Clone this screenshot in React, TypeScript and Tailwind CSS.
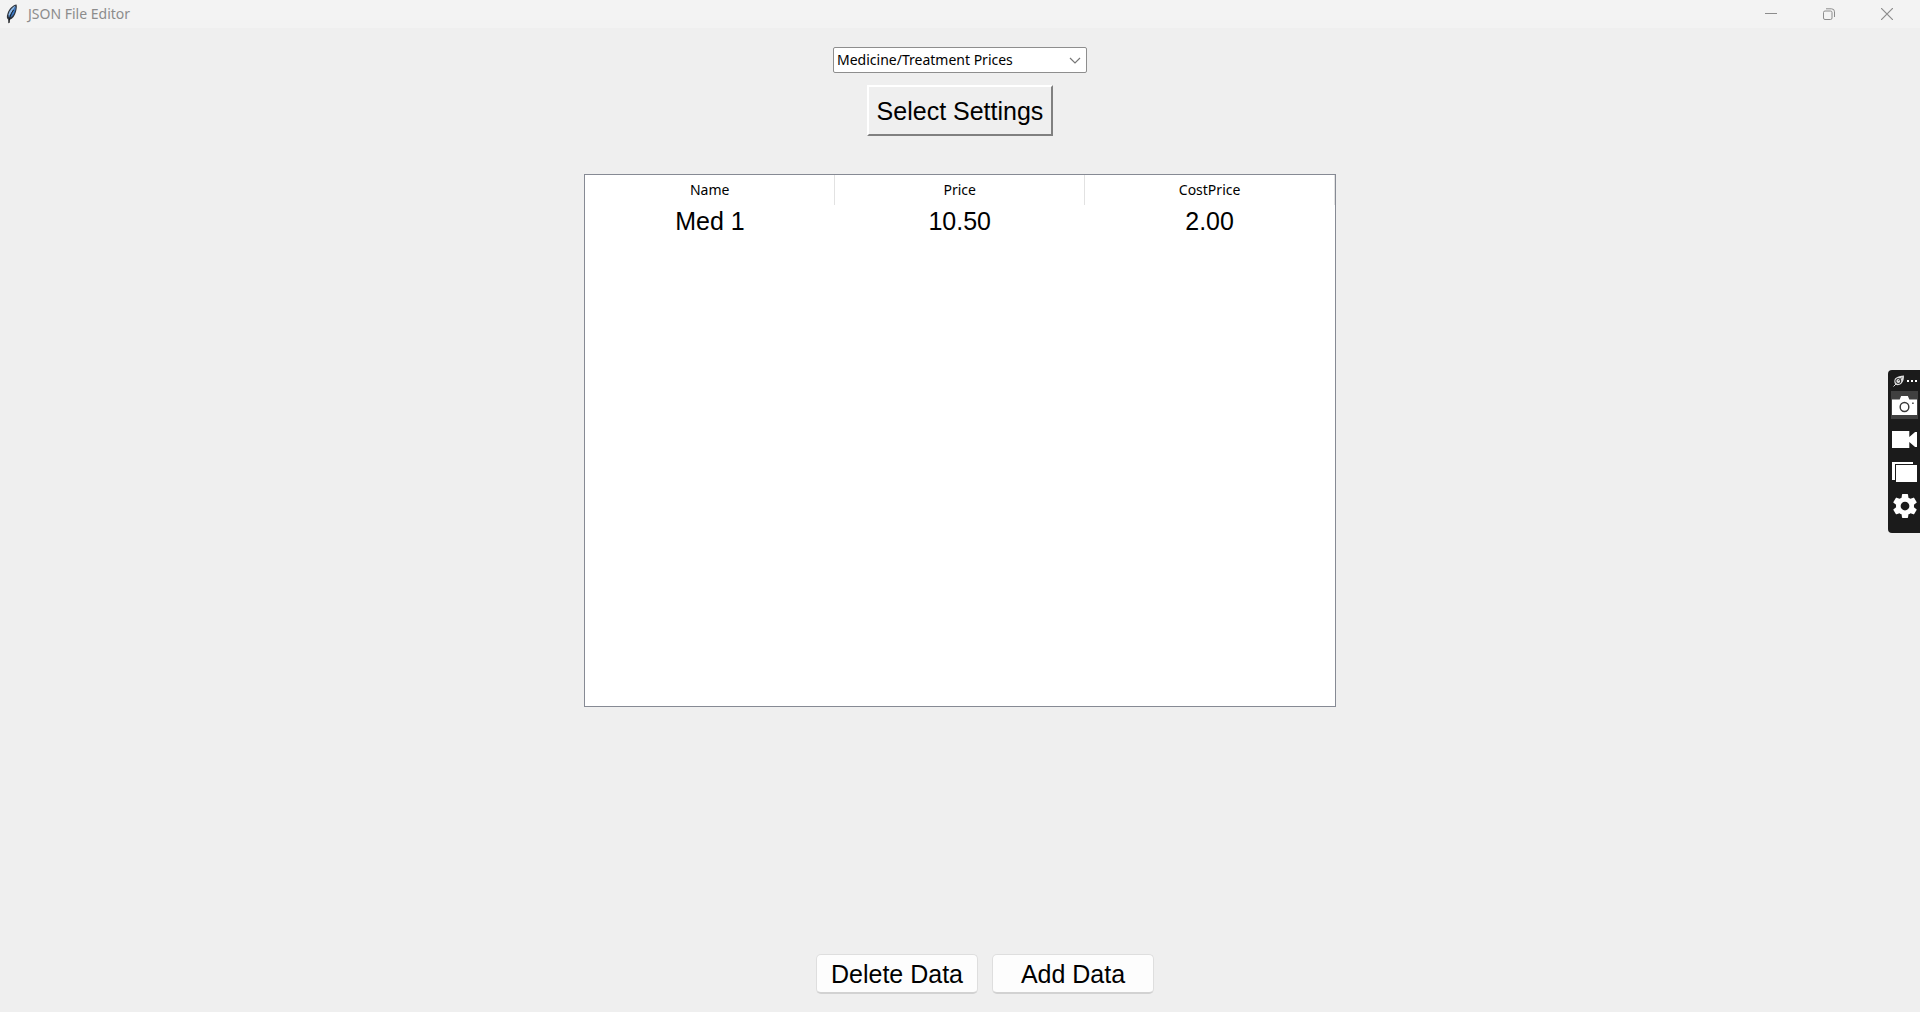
import { useState } from "react";

const ROWS = [{ name: "Med 1", price: "10.50", cost: "2.00" }];
const HEADERS = ["Name", "Price", "CostPrice"];

function Feather() {
  return (
    <svg className="h-5 w-3" viewBox="0 0 12 20" aria-hidden="true">
      <path d="M10.500 .5C6.500 1 3 5 1.500 9.500c-1 3-.9 5 .6 6l.6 4.300 1-4c3-1 5.200-4 6.300-8 .7-2.700 1.200-5.500.5-7.300z" fill="#2e343d" />
      <path d="M9.500 1.800C6.500 3 3.500 6.500 2.500 10.500l.2 2.500L8.500 4z" fill="#8cb8e6" />
      <path d="M9.800 2.500C9.700 7 7.500 12 3.800 14L3 12.500 9 3z" fill="#3b78c4" />
      <path d="M7.500 6C5.500 9 3.800 12 3 19" fill="none" stroke="#151515" strokeWidth="1" />
    </svg>
  );
}

function TitleBar() {
  const button = "flex h-7 w-[58px] items-center justify-center";
  return (
    <header className="flex h-7 items-center bg-[#f3f3f3] pr-1 pl-1.5">
      <Feather />
      <h1 className="ml-2.5 flex-1 font-['Noto_Sans',sans-serif] text-[14px] leading-5 text-[#8c8c8c]">JSON File Editor</h1>
      <div className="flex text-[#8c8c8c]">
        <button className={button} aria-label="Minimize">
          <svg className="size-3" viewBox="0 0 12 12" stroke="currentColor"><path d="M0 5.500h12" /></svg>
        </button>
        <button className={button} aria-label="Restore">
          <svg className="size-3" viewBox="0 0 12 12" fill="none" stroke="currentColor">
            <rect x=".5" y="3" width="8.500" height="8.500" rx="1.500" />
            <path d="M3 .8h5.500a3 3 0 0 1 3 3V9" />
          </svg>
        </button>
        <button className={button} aria-label="Close">
          <svg className="size-3" viewBox="0 0 12 12" stroke="currentColor" strokeWidth="1.200"><path d="M0 0l12 12M12 0L0 12" /></svg>
        </button>
      </div>
    </header>
  );
}

function CaptureBar() {
  return (
    <aside className="absolute top-[370px] right-0 flex h-[163px] w-8 flex-col items-end rounded-l bg-[#1b1b1b] pr-0.5 text-white">
      <div className="flex h-[21px] w-full items-center justify-end gap-0.5">
        <svg className="h-3 w-3" viewBox="0 0 12 12" fill="none" aria-hidden="true">
          <path d="M2 3.500C4 1.500 8 .5 11 .5c0 3-.5 6-2.500 8S4 10.500 2.500 9.500 1 5 2 3.500z" fill="#ddd" />
          <circle cx="5.300" cy="6" r="2.500" stroke="#1b1b1b" />
          <path d="M5.300 6l3.500-3.500" stroke="#444" />
          <path d="M.5 11.500l2.500-2.500" stroke="#ddd" />
        </svg>
        <button className="flex h-3 items-center" aria-label="More">
          <svg className="h-3 w-[11px]" viewBox="0 0 11 12" fill="currentColor"><path d="M0 5h2v2H0zM4 5h2v2H4zM8 5h2v2H8z" /></svg>
        </button>
      </div>
      <button className="flex h-7 w-[27px] items-center justify-center bg-[#404040]" aria-label="Screenshot">
        <svg className="h-[19px] w-[25px]" viewBox="0 0 26 19" preserveAspectRatio="none">
          <path d="M0 3.500h8L9.500 0h7L18 3.500h8V19H0z" fill="white" />
          <circle cx="13" cy="11" r="4.500" fill="white" stroke="#383838" strokeWidth="1.500" />
          <path d="M21 6.500h1.500V8H21z" fill="#383838" />
        </svg>
      </button>
      <button className="flex h-10 w-[27px] items-center justify-center" aria-label="Record">
        <svg className="h-[17px] w-[25px]" viewBox="0 0 26 17" preserveAspectRatio="none" fill="white"><path d="M0 0h18v6l6-5h2v15h-2l-6-5v6H0z" /></svg>
      </button>
      <button className="flex h-[26px] w-[27px] items-center justify-center" aria-label="Gallery">
        <svg className="h-5 w-[25px]" viewBox="0 0 25 20" fill="white">
          <path d="M0 0h21v2H3v16H0z" /><path d="M4 3h21v17H4z" />
        </svg>
      </button>
      <button className="flex h-[42px] w-[27px] items-center justify-center" aria-label="Settings">
        <svg className="size-[30px] shrink-0" viewBox="0 0 24 24" fill="white">
          <path d="M19.140 12.940c.04-.3.060-.61.060-.94s-.02-.64-.07-.94l2.030-1.580a.49.49 0 0 0 .12-.61l-1.920-3.320a.49.49 0 0 0-.59-.22l-2.390.96a7 7 0 0 0-1.620-.94l-.36-2.540A.48.48 0 0 0 13.920 2.400h-3.840a.48.48 0 0 0-.47.41l-.36 2.540c-.59.24-1.130.57-1.620.94l-2.390-.96a.48.48 0 0 0-.59.22L2.740 8.870c-.12.21-.08.47.12.61l2.030 1.580a6.500 6.500 0 0 0 0 1.880l-2.030 1.580a.49.49 0 0 0-.12.61l1.920 3.320c.12.22.37.29.59.22l2.390-.96c.5.38 1.030.7 1.620.94l.36 2.540c.05.24.24.41.47.41h3.840c.24 0 .44-.17.47-.41l.36-2.540c.59-.24 1.130-.56 1.620-.94l2.390.96c.22.080.47 0 .59-.22l1.920-3.320a.49.49 0 0 0-.12-.61zM12 15.500a3.500 3.500 0 1 1 0-7 3.500 3.500 0 0 1 0 7z" />
        </svg>
      </button>
    </aside>
  );
}

export default function App() {
  const [setting, setSetting] = useState("Medicine/Treatment Prices");
  const action =
    "h-10 w-[162px] rounded-[5px] border border-b-2 border-[#dedede] border-b-[#d2d2d2] bg-[#fdfdfd] text-[25px] leading-8";

  return (
    <div className="relative flex min-h-screen flex-col bg-[#efefef] font-['Liberation_Sans',Arial,sans-serif] text-black">
      <TitleBar />
      <main className="flex flex-1 flex-col items-center pt-[19px] pb-[18px]">
        <div className="relative">
          <select
            aria-label="Settings file"
            value={setting}
            onChange={(e) => setSetting(e.target.value)}
            className="block h-[26px] w-[254px] appearance-none rounded-xs border border-[#8e8e8e] bg-white pl-[3px] font-['Noto_Sans',sans-serif] text-[14px] leading-5"
          >
            <option>Medicine/Treatment Prices</option>
          </select>
          <svg className="pointer-events-none absolute top-2.5 right-1.5 h-2 w-3" viewBox="0 0 12 8" fill="none" stroke="#777" strokeWidth="1.200">
            <path d="M1 1l5 5 5-5" />
          </svg>
        </div>
        <button className="mt-3 h-[51px] w-[186px] border-2 border-t-white border-r-[#808080] border-b-[#808080] border-l-white text-[25px] leading-8">
          Select Settings
        </button>
        <div className="mt-[38px] h-[533px] w-[752px] border border-[#868a94] bg-white">
          <table className="w-full table-fixed border-collapse text-center">
            <thead>
              <tr className="h-[30px] font-['Noto_Sans',sans-serif] text-[14px] leading-5">
                {HEADERS.map((h) => (
                  <th key={h} scope="col" className="border-r border-[#e2e2e2] p-0 font-normal">{h}</th>
                ))}
              </tr>
            </thead>
            <tbody>
              {ROWS.map((r) => (
                <tr key={r.name} className="h-8 text-[25px] leading-8">
                  <td className="p-0">{r.name}</td>
                  <td className="p-0">{r.price}</td>
                  <td className="p-0">{r.cost}</td>
                </tr>
              ))}
            </tbody>
          </table>
        </div>
        <div className="mt-auto flex gap-3.5 pl-[50px]">
          <button className={action}>Delete Data</button>
          <button className={action}>Add Data</button>
        </div>
      </main>
      <CaptureBar />
    </div>
  );
}
